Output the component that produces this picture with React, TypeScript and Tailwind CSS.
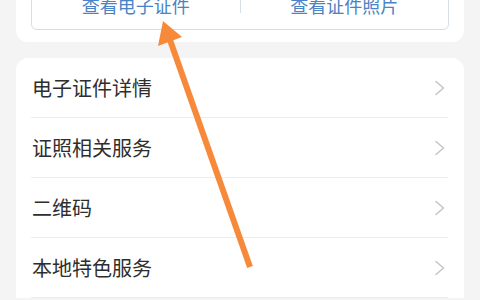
import React from "react";

const rows = ["电子证件详情", "证照相关服务", "二维码", "本地特色服务"];

function Chevron() {
  return (
    <svg width="12" height="16" viewBox="0 0 12 16" className="shrink-0">
      <path d="M2 1.5 L9.5 8 L2 14.5" fill="none" stroke="#c4c4c4" strokeWidth="1.5" strokeLinecap="round" strokeLinejoin="round" />
    </svg>
  );
}

export default function App() {
  return (
    <div
      className="relative w-[480px] h-[300px] overflow-hidden bg-[#f4f4f4]"
      style={{ fontFamily: '"Noto Sans CJK SC", "Noto Sans", sans-serif' }}
    >
      <div className="-mt-[30px] px-[16px]">
        <div className="bg-white rounded-[12px] pt-[10px] px-[15px] pb-[12px]">
          <div className="h-[50px] border border-[#d5dde6] rounded-[6px] flex items-center">
            <div className="flex-1 text-center text-[18px] text-[#4a83c6] leading-none">查看电子证件</div>
            <div className="w-px h-[16px] bg-[#d5dde6]" />
            <div className="flex-1 text-center text-[18px] text-[#4a83c6] leading-none">查看证件照片</div>
          </div>
        </div>
        <div className="mt-[16px] bg-white rounded-t-[12px] pl-[15px] pr-[16px]">
          {rows.map((r) => (
            <div key={r} className="h-[60px] flex items-center justify-between pr-[2px] border-b border-[#ececec]">
              <span className="text-[20px] text-[#2e2e2e] leading-none pl-[1px]">{r}</span>
              <Chevron />
            </div>
          ))}
        </div>
      </div>
      <svg className="absolute left-0 top-0 pointer-events-none" width="480" height="300" viewBox="0 0 480 300">
        <line x1="250" y1="267" x2="170" y2="40" stroke="#f7893b" strokeWidth="6" />
        <polygon points="163,21 182,37 158,46" fill="#f7893b" />
      </svg>
    </div>
  );
}
